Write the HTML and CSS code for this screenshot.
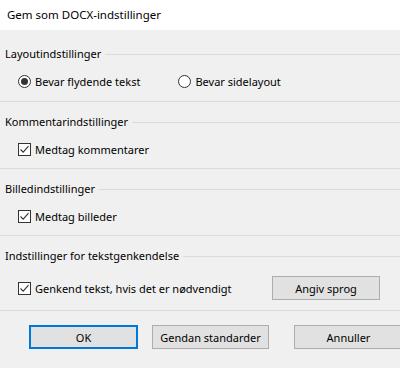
FILE: index.html
```html
<!DOCTYPE html>
<html>
<head>
  <meta charset="UTF-8">
  <title>Gem som DOCX-indstillinger</title>
  <link rel="stylesheet" href="styles.css">
</head>
<body>
  <div class="dialog">
    <div class="titlebar">Gem som DOCX-indstillinger</div>

    <div class="group group-first">
      <div class="group-head"><span>Layoutindstillinger</span><i class="rule"></i></div>
      <div class="row">
        <label class="opt">
          <svg class="ico" width="13" height="13" viewBox="0 0 13 13"><circle cx="6.5" cy="6.5" r="6" fill="#fff" stroke="#333"/><circle cx="6.5" cy="6.5" r="3.5" fill="#333"/></svg>
          Bevar flydende tekst
        </label>
        <label class="opt opt-second">
          <svg class="ico" width="13" height="13" viewBox="0 0 13 13"><circle cx="6.5" cy="6.5" r="6" fill="#fff" stroke="#333"/></svg>
          Bevar sidelayout
        </label>
      </div>
    </div>

    <div class="group">
      <div class="group-head"><span>Kommentarindstillinger</span><i class="rule"></i></div>
      <div class="row">
        <label class="opt">
          <svg class="ico" width="13" height="13" viewBox="0 0 13 13"><rect x="0.5" y="0.5" width="12" height="12" fill="#fff" stroke="#333"/><path d="M2.5 6.5 L5.2 9.2 L10.5 3.2" fill="none" stroke="#333" stroke-width="1.1"/></svg>
          Medtag kommentarer
        </label>
      </div>
    </div>

    <div class="group">
      <div class="group-head"><span>Billedindstillinger</span><i class="rule"></i></div>
      <div class="row">
        <label class="opt">
          <svg class="ico" width="13" height="13" viewBox="0 0 13 13"><rect x="0.5" y="0.5" width="12" height="12" fill="#fff" stroke="#333"/><path d="M2.5 6.5 L5.2 9.2 L10.5 3.2" fill="none" stroke="#333" stroke-width="1.1"/></svg>
          Medtag billeder
        </label>
      </div>
    </div>

    <div class="group group-last">
      <div class="group-head"><span>Indstillinger for tekstgenkendelse</span><i class="rule"></i></div>
      <div class="row row-btn">
        <label class="opt">
          <svg class="ico" width="13" height="13" viewBox="0 0 13 13"><rect x="0.5" y="0.5" width="12" height="12" fill="#fff" stroke="#333"/><path d="M2.5 6.5 L5.2 9.2 L10.5 3.2" fill="none" stroke="#333" stroke-width="1.1"/></svg>
          Genkend tekst, hvis det er nødvendigt
        </label>
        <button class="btn btn-lang">Angiv sprog</button>
      </div>
    </div>

    <div class="actions">
      <button class="btn btn-default">OK</button>
      <button class="btn btn-reset">Gendan standarder</button>
      <button class="btn btn-cancel">Annuller</button>
    </div>
  </div>
</body>
</html>
```
FILE: styles.css
```css
/* Dialog window */
body {
  margin: 0;
  padding: 0;
  font-family: "Noto Sans", "Open Sans", sans-serif;
  font-size: 11px;
  color: #000;
  background-color: #f0f0f0;
  overflow: hidden;
}

.dialog {
  width: 400px;
  height: 368px;
  overflow: hidden;
}

.titlebar {
  height: 30px;
  line-height: 30px;
  padding-left: 7px;
  font-size: 11.5px;
  background-color: #fff;
}

/* Groups */
.group {
  padding-top: 12px;
  padding-bottom: 9px;
  border-bottom: 1px solid #dadada;
}

.group-first {
  padding-top: 16px;
  padding-bottom: 10px;
}

.group-last {
  padding-bottom: 10px;
}

.group-head {
  display: flex;
  align-items: center;
  height: 16px;
  line-height: 16px;
  padding-left: 5px;
}

.rule {
  flex: 1;
  height: 1px;
  margin-left: 4px;
  background-color: #dadada;
}

.row {
  display: flex;
  align-items: center;
  height: 20px;
  margin-top: 9px;
  padding-left: 18px;
}

.row-btn {
  height: 24px;
  margin-top: 12px;
  padding-right: 20px;
}

.opt {
  display: flex;
  align-items: center;
  gap: 4px;
  white-space: nowrap;
}

.opt-second {
  margin-left: 38px;
}

.ico {
  flex: none;
}

/* Buttons */
.btn {
  height: 24px;
  padding: 0;
  font-family: inherit;
  font-size: 11px;
  color: #000;
  background-color: #e1e1e1;
  border: 1px solid #adadad;
  box-sizing: border-box;
  flex: none;
}

.btn-lang {
  width: 108px;
  margin-left: auto;
}

.actions {
  display: flex;
  padding-top: 14px;
  padding-left: 29px;
}

.btn-default {
  width: 109px;
  border: 2px solid #0078d7;
}

.btn-reset {
  width: 117px;
  margin-left: 14px;
}

.btn-cancel {
  width: 109px;
  margin-left: 25px;
}
```
